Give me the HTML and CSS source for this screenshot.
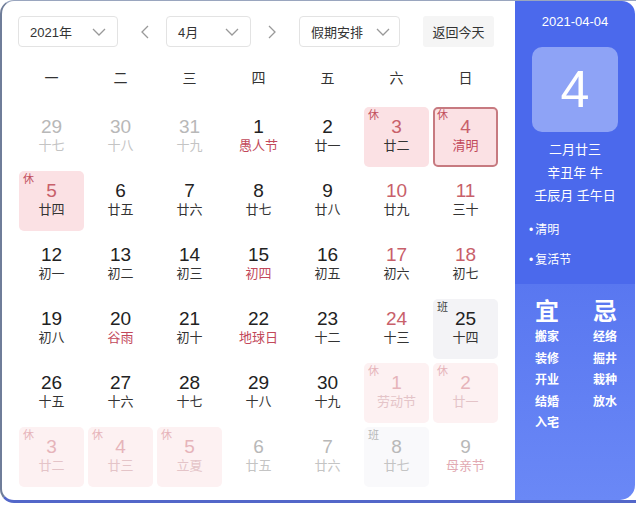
FILE: index.html
```html
<!DOCTYPE html>
<html lang="zh">
<head>
<meta charset="utf-8">
<link rel="stylesheet" href="styles.css">
</head>
<body>
<div class="frame">
  <div class="main">
    <div class="toolbar">
      <div class="select sel-year"><span>2021年</span><svg class="chev" viewBox="0 0 14 8"><path d="M1 1 L7 7 L13 1" /></svg></div>
      <div class="arrow arrow-l"><svg viewBox="0 0 8 14"><path d="M7 1 L1 7 L7 13" /></svg></div>
      <div class="select sel-month"><span>4月</span><svg class="chev" viewBox="0 0 14 8"><path d="M1 1 L7 7 L13 1" /></svg></div>
      <div class="arrow arrow-r"><svg viewBox="0 0 8 14"><path d="M1 1 L7 7 L1 13" /></svg></div>
      <div class="select sel-hol"><span>假期安排</span><svg class="chev" viewBox="0 0 14 8"><path d="M1 1 L7 7 L13 1" /></svg></div>
      <div class="btn-today">返回今天</div>
    </div>
    <div class="weekdays">
      <span>一</span><span>二</span><span>三</span><span>四</span><span>五</span><span>六</span><span>日</span>
    </div>
    <div class="grid">
      <div class="cell out"><b>29</b><i>十七</i></div>
      <div class="cell out"><b>30</b><i>十八</i></div>
      <div class="cell out"><b>31</b><i>十九</i></div>
      <div class="cell fest"><b>1</b><i>愚人节</i></div>
      <div class="cell"><b>2</b><i>廿一</i></div>
      <div class="cell rest wk"><em>休</em><b>3</b><i>廿二</i></div>
      <div class="cell rest wk today fest"><em>休</em><b>4</b><i>清明</i></div>

      <div class="cell rest wk"><em>休</em><b>5</b><i>廿四</i></div>
      <div class="cell"><b>6</b><i>廿五</i></div>
      <div class="cell"><b>7</b><i>廿六</i></div>
      <div class="cell"><b>8</b><i>廿七</i></div>
      <div class="cell"><b>9</b><i>廿八</i></div>
      <div class="cell wk"><b>10</b><i>廿九</i></div>
      <div class="cell wk"><b>11</b><i>三十</i></div>

      <div class="cell"><b>12</b><i>初一</i></div>
      <div class="cell"><b>13</b><i>初二</i></div>
      <div class="cell"><b>14</b><i>初三</i></div>
      <div class="cell fest"><b>15</b><i>初四</i></div>
      <div class="cell"><b>16</b><i>初五</i></div>
      <div class="cell wk"><b>17</b><i>初六</i></div>
      <div class="cell wk"><b>18</b><i>初七</i></div>

      <div class="cell"><b>19</b><i>初八</i></div>
      <div class="cell fest"><b>20</b><i>谷雨</i></div>
      <div class="cell"><b>21</b><i>初十</i></div>
      <div class="cell fest"><b>22</b><i>地球日</i></div>
      <div class="cell"><b>23</b><i>十二</i></div>
      <div class="cell wk"><b>24</b><i>十三</i></div>
      <div class="cell work"><em>班</em><b>25</b><i>十四</i></div>

      <div class="cell"><b>26</b><i>十五</i></div>
      <div class="cell"><b>27</b><i>十六</i></div>
      <div class="cell"><b>28</b><i>十七</i></div>
      <div class="cell"><b>29</b><i>十八</i></div>
      <div class="cell"><b>30</b><i>十九</i></div>
      <div class="cell out rest"><em>休</em><b>1</b><i>劳动节</i></div>
      <div class="cell out rest"><em>休</em><b>2</b><i>廿一</i></div>

      <div class="cell out rest"><em>休</em><b>3</b><i>廿二</i></div>
      <div class="cell out rest"><em>休</em><b>4</b><i>廿三</i></div>
      <div class="cell out rest"><em>休</em><b>5</b><i>立夏</i></div>
      <div class="cell out"><b>6</b><i>廿五</i></div>
      <div class="cell out"><b>7</b><i>廿六</i></div>
      <div class="cell out work"><em>班</em><b>8</b><i>廿七</i></div>
      <div class="cell out fest"><b>9</b><i>母亲节</i></div>
    </div>
  </div>
  <div class="side">
    <div class="side-top">
      <div class="side-date">2021-04-04</div>
      <div class="big-day">4</div>
      <div class="lunar-info">
        <div>二月廿三</div>
        <div>辛丑年 牛</div>
        <div>壬辰月 壬午日</div>
      </div>
      <ul class="fests">
        <li>清明</li>
        <li>复活节</li>
      </ul>
    </div>
    <div class="side-bottom">
      <div class="yj-col">
        <div class="yj-title">宜</div>
        <div>搬家</div><div>装修</div><div>开业</div><div>结婚</div><div>入宅</div>
      </div>
      <div class="yj-col">
        <div class="yj-title">忌</div>
        <div>经络</div><div>掘井</div><div>栽种</div><div>放水</div>
      </div>
    </div>
  </div>
</div>
</body>
</html>
```

FILE: styles.css
```css
* { box-sizing: border-box; }
html, body { margin: 0; padding: 0; background: #ffffff; }
body {
  width: 640px;
  height: 505px;
  overflow: hidden;
  font-family: "Liberation Sans", "Noto Sans CJK SC", sans-serif;
  color: #333;
}
.frame {
  width: 636px;
  height: 503px;
  display: flex;
  border-left: 2px solid #6f7d99;
  border-top: 1px solid #9aa6bf;
  border-bottom: 3px solid #5367c9;
  border-radius: 14px 0 0 14px;
  background: #fff;
  overflow: hidden;
}
.main {
  width: 513px;
  padding: 15px 0 0 16px;
}
.toolbar {
  display: flex;
  align-items: center;
  height: 31px;
}
.select {
  height: 31px;
  border: 1px solid #e3e3e3;
  border-radius: 4px;
  background: #fff;
  display: flex;
  align-items: center;
  justify-content: space-between;
  padding: 0 11px 0 11px;
  font-size: 13px;
  color: #333;
}
.sel-year { width: 100px; }
.sel-month { width: 85px; }
.sel-hol { width: 101px; padding-right: 9px; }
.chev { width: 14px; height: 8px; }
.chev path, .arrow path {
  fill: none;
  stroke: #999;
  stroke-width: 1.3;
}
.arrow {
  width: 20px;
  height: 31px;
  display: flex;
  align-items: center;
  justify-content: center;
}
.arrow svg { width: 8px; height: 14px; }
.arrow-l { margin: 0 11px 0 17px; }
.arrow-r { margin: 0 17px 0 11px; }
.btn-today {
  margin-left: 23px;
  width: 71px;
  height: 31px;
  background: #f5f5f5;
  border-radius: 3px;
  font-size: 13px;
  color: #333;
  display: flex;
  align-items: center;
  justify-content: center;
}
.weekdays {
  display: grid;
  grid-template-columns: repeat(7, 65px);
  column-gap: 4px;
  height: 60px;
  align-items: center;
  font-size: 14px;
  color: #333;
  padding-left: 1px;
}
.weekdays span { text-align: center; }
.grid {
  display: grid;
  grid-template-columns: repeat(7, 65px);
  grid-auto-rows: 60px;
  gap: 4px;
  padding-left: 1px;
}
.cell {
  position: relative;
  border-radius: 5px;
  padding-top: 9px;
  display: flex;
  flex-direction: column;
  align-items: center;
}
.cell b {
  font-weight: normal;
  font-size: 19px;
  line-height: 22px;
  color: #222;
}
.cell i {
  font-style: normal;
  font-size: 13px;
  line-height: 16px;
  color: #333;
}
.cell em {
  position: absolute;
  top: 1px;
  left: 4px;
  font-style: normal;
  font-size: 11px;
  line-height: 14px;
  color: #c2505e;
}
.cell.wk b { color: #c8606a; }
.cell.fest i { color: #c2485a; }
.cell.rest { background: #fbe1e4; }
.cell.today { border: 2px solid #c77a80; padding-top: 7px; }
.cell.today em { top: -1px; left: 2px; }
.cell.work { background: #f3f3f6; }
.cell.work em { color: #444; }
.cell.out b { color: #b8b8b8; }
.cell.out i { color: #c4c4c4; }
.cell.out.rest { background: #fdf1f2; }
.cell.out.rest b, .cell.out.rest em { color: #e6b4ba; }
.cell.out.rest i { color: #e4c4c8; }
.cell.out.work { background: #f9f9fb; }
.cell.out.work em { color: #b8b8b8; }
.cell.out.fest i { color: #e2aab2; }
.side {
  width: 120px;
  height: 100%;
  margin-left: 0;
  border-radius: 0 13px 15px 0;
  overflow: hidden;
  display: flex;
  flex-direction: column;
  color: #fff;
}
.side-top {
  background: #4b69ec;
  height: 283px;
  padding-top: 12px;
  display: flex;
  flex-direction: column;
  align-items: center;
}
.side-date {
  font-size: 13px;
  line-height: 18px;
}
.big-day {
  margin-top: 16px;
  width: 86px;
  height: 85px;
  border-radius: 10px;
  background: #8ea3f6;
  font-size: 52px;
  line-height: 85px;
  text-align: center;
}
.lunar-info {
  margin-top: 6px;
  font-size: 13px;
  line-height: 23px;
  text-align: center;
}
.fests {
  list-style: none;
  margin: 15px 0 0 0;
  padding: 0 0 0 14px;
  align-self: stretch;
  font-size: 12px;
}
.fests li { line-height: 16px; margin-bottom: 14px; }
.fests li::before { content: "•"; margin-right: 2px; }
.side-bottom {
  flex: 1;
  background: linear-gradient(#5977f0, #6a88f6);
  display: flex;
  justify-content: center;
  gap: 34px;
  padding: 13px 0 0 2px;
}
.yj-col {
  display: flex;
  flex-direction: column;
  align-items: center;
  font-size: 12px;
  font-weight: bold;
  line-height: 21.5px;
}
.yj-title {
  font-size: 24px;
  line-height: 30px;
  font-weight: bold;
  margin-bottom: 0;
}
```
